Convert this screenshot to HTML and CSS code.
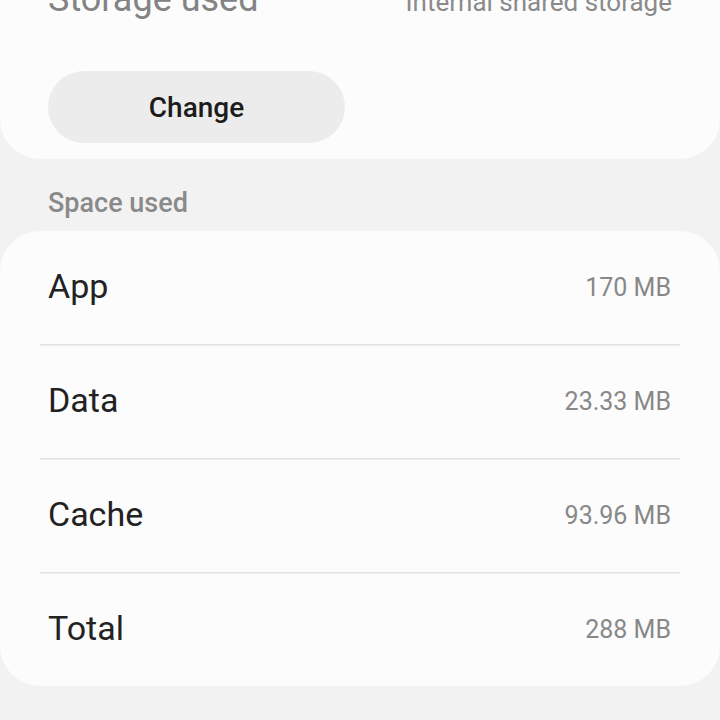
FILE: index.html
```html
<!DOCTYPE html>
<html lang="en">

<head>
    <meta charset="UTF-8">
    <meta name="viewport" content="width=device-width, initial-scale=1.0">
    <title>Storage</title>
    <link rel="stylesheet" href="styles.css">
</head>

<body>
    <div class="card top-card">
        <div class="storage-row">
            <span class="storage-title">Storage used</span>
            <span class="storage-value">Internal shared storage</span>
        </div>
        <button class="change-btn">Change</button>
    </div>

    <div class="section-label">Space used</div>

    <div class="card usage-card">
        <div class="usage-row">
            <span class="usage-name">App</span>
            <span class="usage-size">170 MB</span>
        </div>
        <div class="usage-row">
            <span class="usage-name">Data</span>
            <span class="usage-size">23.33 MB</span>
        </div>
        <div class="usage-row">
            <span class="usage-name">Cache</span>
            <span class="usage-size">93.96 MB</span>
        </div>
        <div class="usage-row">
            <span class="usage-name">Total</span>
            <span class="usage-size">288 MB</span>
        </div>
    </div>
</body>

</html>
```

FILE: styles.css
```css
body {
    margin: 0;
    background-color: #f2f2f2;
    font-family: Roboto, "Liberation Sans", sans-serif;
    height: 720px;
    overflow: hidden;
}

.card {
    background-color: #fcfcfc;
    border-radius: 40px;
}

.top-card {
    margin-top: -31px;
    padding: 0 48px 16px 48px;
    border-top-left-radius: 0;
    border-top-right-radius: 0;
}

.storage-row {
    display: flex;
    justify-content: space-between;
    align-items: baseline;
    height: 70px;
    line-height: 60px;
}

.storage-title {
    font-size: 36px;
    color: #838383;
}

.storage-value {
    font-size: 26px;
    color: #8a8a8a;
}

.change-btn {
    display: block;
    margin-top: 32px;
    width: 297px;
    height: 72px;
    border: none;
    border-radius: 36px;
    background-color: #ececec;
    color: #1c1c1c;
    font-family: Roboto, "Liberation Sans", sans-serif;
    font-size: 28px;
    font-weight: 500;
}

.section-label {
    padding: 28px 48px 0 48px;
    height: 44px;
    font-size: 27px;
    font-weight: 500;
    color: #8a8a8a;
}

.usage-card {
    padding: 0 40px;
}

.usage-row {
    display: flex;
    justify-content: space-between;
    align-items: center;
    height: 113px;
    padding: 0 9px 0 8px;
    border-bottom: 1px solid #e4e4e4;
    box-shadow: 0 1px 0 #ececec;
}

.usage-row:last-child {
    border-bottom: none;
    box-shadow: none;
}

.usage-name {
    font-size: 34px;
    color: #222;
    margin-bottom: 4px;
}

.usage-size {
    font-size: 25px;
    color: #888;
}
```
